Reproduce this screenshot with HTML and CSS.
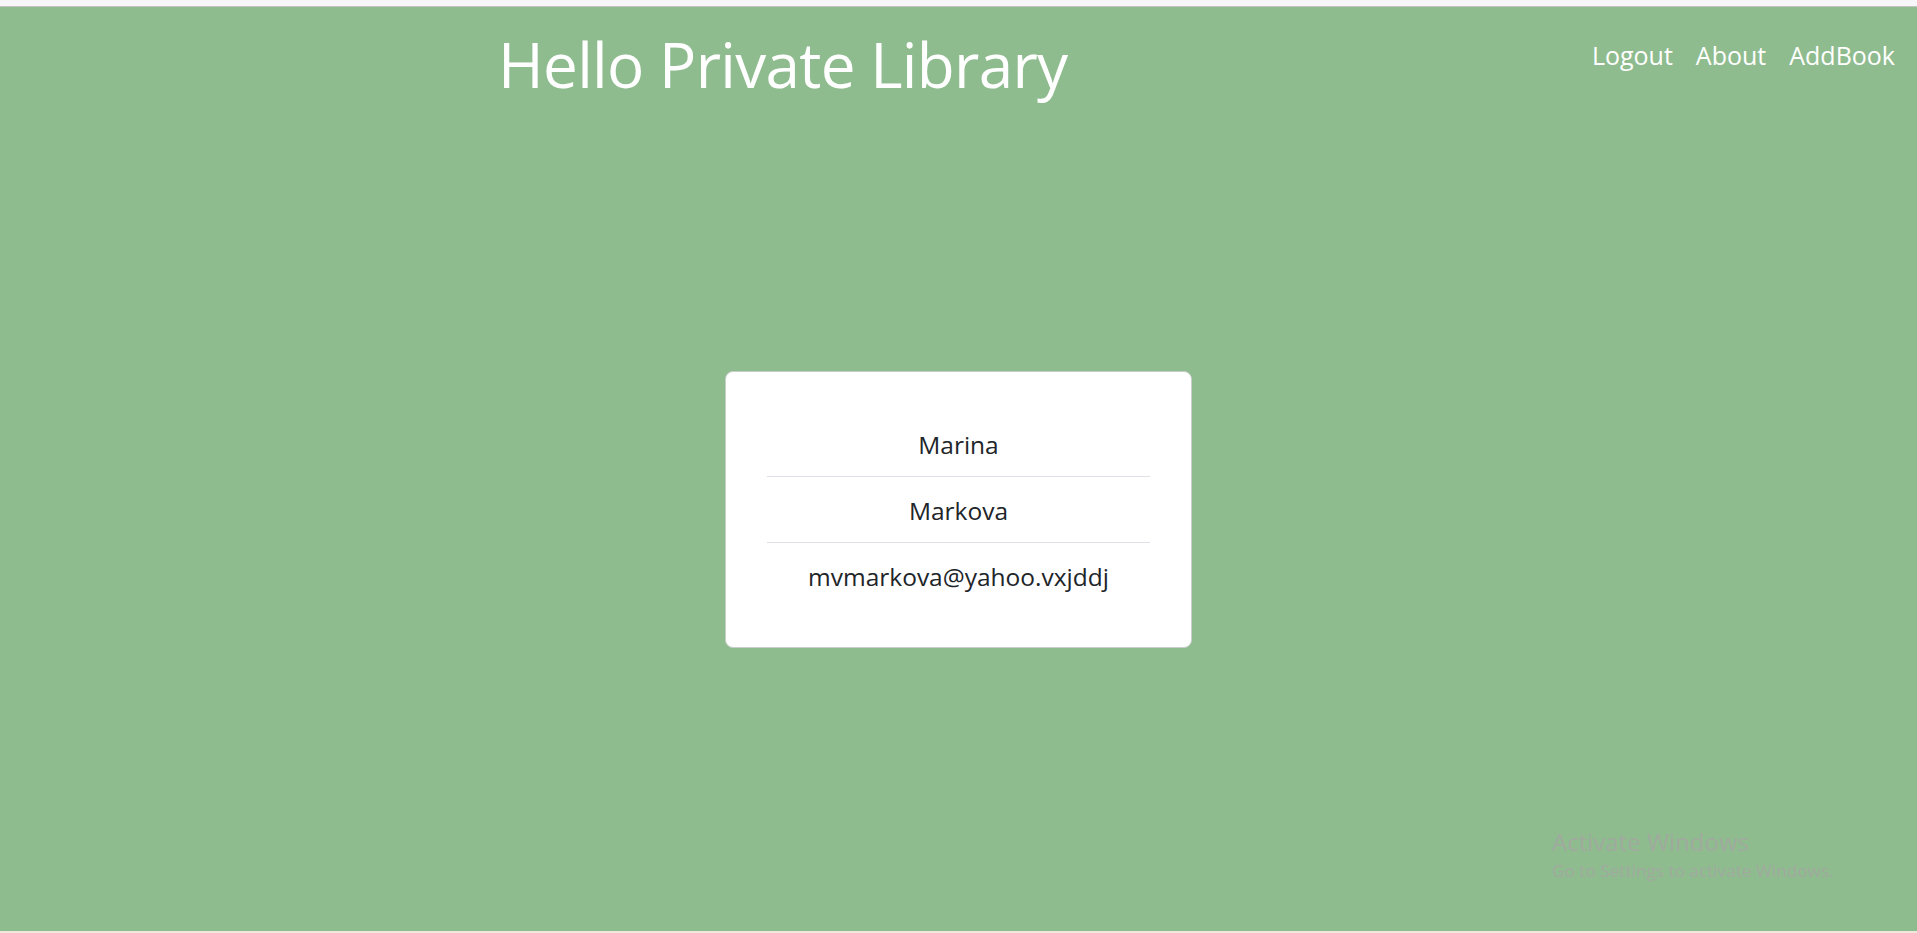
FILE: index.html
```html
<!DOCTYPE html>
<html lang="en">
<head>
<meta charset="utf-8">
<title>Hello Private Library</title>
<link rel="stylesheet" href="styles.css">
</head>
<body>
<div class="top-strip"></div>
<main class="page">
  <header class="header">
    <h1 class="title">Hello Private Library</h1>
    <nav class="nav">
      <a class="nav-link" href="#">Logout</a>
      <a class="nav-link" href="#">About</a>
      <a class="nav-link" href="#">AddBook</a>
    </nav>
  </header>
  <section class="content">
    <div class="card">
      <ul class="list">
        <li class="item">Marina</li>
        <li class="item">Markova</li>
        <li class="item">mvmarkova@yahoo.vxjddj</li>
      </ul>
    </div>
  </section>
  <div class="watermark">
    <div class="wm-title">Activate Windows</div>
    <div class="wm-sub">Go to Settings to activate Windows.</div>
  </div>
</main>
<div class="bottom-strip"></div>
</body>
</html>
```

FILE: styles.css
```css
html, body {
  margin: 0;
  padding: 0;
  height: 100%;
}
body {
  display: flex;
  flex-direction: column;
  font-family: "Open Sans", "Noto Sans", sans-serif;
  background: #f7f7f9;
  overflow: hidden;
}
.top-strip {
  height: 6px;
  flex: 0 0 6px;
  background: #f7f7f9;
  border-bottom: 1px solid #c3c3c3;
}
.page {
  position: relative;
  flex: 1 1 auto;
  background: #8fbc8f;
  display: flex;
  flex-direction: column;
}
.bottom-strip {
  flex: 0 0 2px;
  height: 2px;
  background: #efe6dc;
}
.header {
  display: flex;
  align-items: flex-start;
  justify-content: space-between;
  padding: 0 22px 0 498px;
}
.title {
  margin: 17px 0 0 0;
  font-weight: 400;
  font-size: 62px;
  line-height: 80px;
  letter-spacing: -0.7px;
  color: #ffffff;
}
.nav {
  display: flex;
  gap: 23px;
  margin-top: 31px;
}
.nav-link {
  color: #ffffff;
  text-decoration: none;
  font-size: 25px;
  line-height: 34px;
}
.content {
  display: flex;
  justify-content: center;
  padding-top: 267px;
}
.card {
  width: 467px;
  box-sizing: border-box;
  background: #ffffff;
  border: 1px solid #c9cdca;
  border-radius: 8px;
  padding: 39px 41px 39px;
}
.list {
  list-style: none;
  margin: 0;
  padding: 0;
}
.item {
  text-align: center;
  font-size: 24.5px;
  line-height: 61px;
  padding-top: 3px;
  padding-bottom: 1px;
  color: #212529;
  border-bottom: 1px solid #dee2e6;
}
.item:last-child {
  border-bottom: none;
}
.watermark {
  position: absolute;
  left: 1552px;
  top: 819px;
  color: #a0aa9e;
}
.wm-title {
  font-size: 24px;
  line-height: 31px;
}
.wm-sub {
  font-size: 17.2px;
  line-height: 28px;
}
```
